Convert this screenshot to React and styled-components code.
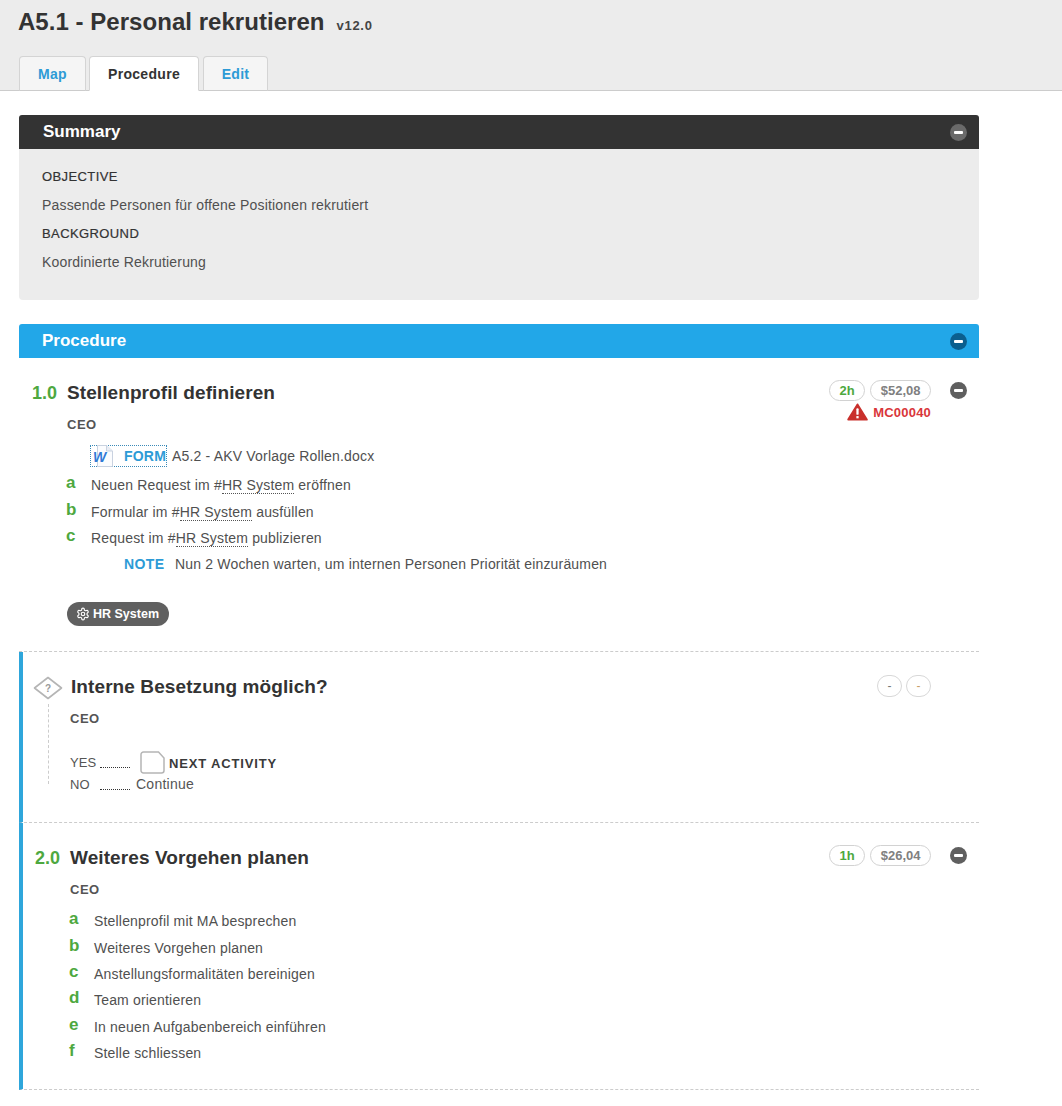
import React from "react";
import styled, { createGlobalStyle } from "styled-components";
import { LuSettings } from "react-icons/lu";

const GlobalStyle = createGlobalStyle`
  html, body {
    margin: 0;
    padding: 0;
    background: #fff;
    font-family: "Liberation Sans", Arial, sans-serif;
    color: #505050;
  }
`;

const Page = styled.div`
  width: 1062px;
  height: 1106px;
  overflow: hidden;
`;

const Header = styled.header`
  height: 90px;
  background: #ececec;
  border-bottom: 1px solid #ccc;
  padding-left: 18px;
  display: flex;
  flex-direction: column;
  justify-content: space-between;
`;

const TitleRow = styled.div`
  display: flex;
  align-items: baseline;
  gap: 12px;
  padding-top: 8px;
`;

const Title = styled.h1`
  margin: 0;
  font-size: 24px;
  line-height: 28px;
  font-weight: bold;
  letter-spacing: 0.04px;
  color: #333;
`;

const Version = styled.span`
  font-size: 13px;
  font-weight: bold;
  letter-spacing: 0.7px;
  color: #444;
`;

const Tabs = styled.nav`
  display: flex;
  gap: 3px;
  padding-left: 1px;
  margin-bottom: -1px;
`;

const Tab = styled.a`
  box-sizing: border-box;
  height: 35px;
  width: ${(p) => p.$w}px;
  margin-right: ${(p) => p.$mr || 0}px;
  display: flex;
  align-items: center;
  justify-content: center;
  font-size: 14px;
  font-weight: bold;
  letter-spacing: 0.3px;
  border: 1px solid #d4d4d4;
  border-bottom: ${(p) => (p.$active ? "1px solid #fff" : "1px solid #ccc")};
  border-radius: 4px 4px 0 0;
  background: ${(p) => (p.$active ? "#fff" : "#f5f5f5")};
  color: ${(p) => (p.$active ? "#333" : "#2d9bd6")};
`;

const Content = styled.main`
  width: 960px;
  margin-left: 19px;
  padding-top: 24px;
`;

const Bar = styled.div`
  height: 34px;
  box-sizing: border-box;
  display: flex;
  align-items: center;
  justify-content: space-between;
  padding: 0 12px 0 ${(p) => p.$pl}px;
  background: ${(p) => p.$bg};
  border-radius: 3px 3px 0 0;
  color: #fff;
  font-size: 17px;
  font-weight: bold;
`;

const Toggle = styled.span`
  width: 17px;
  height: 17px;
  border-radius: 50%;
  background: ${(p) => p.$bg};
  display: flex;
  align-items: center;
  justify-content: center;
  flex: none;
  &::before {
    content: "";
    width: 9px;
    height: 3px;
    background: #fff;
    border-radius: 1px;
  }
`;

const SummaryBody = styled.section`
  height: 151px;
  box-sizing: border-box;
  background: #ececec;
  border-radius: 0 0 4px 4px;
  padding: 21px 23px 0;
  margin-bottom: 24px;
`;

const SummaryHead = styled.div`
  font-size: 13px;
  line-height: 14px;
  letter-spacing: 0.4px;
  margin-bottom: 14px;
  color: #333;
  -webkit-text-stroke: 0.2px #333;
`;

const SummaryText = styled.div`
  font-size: 14px;
  line-height: 14px;
  letter-spacing: 0.18px;
  margin-bottom: 15px;
  color: #505050;
`;

const Block = styled.article`
  position: relative;
  box-sizing: border-box;
  height: ${(p) => p.$h}px;
  padding: ${(p) => p.$pt}px 0 0 ${(p) => p.$pl}px;
  border-left: ${(p) => (p.$rail ? "4px solid #2ea6db" : "0")};
  border-bottom: 1px dashed #ccc;
`;

const Heading = styled.div`
  display: flex;
  align-items: baseline;
  height: 24px;
`;

const Num = styled.span`
  width: 35px;
  flex: none;
  font-size: 18px;
  font-weight: bold;
  color: #4ea83f;
`;

const StepTitle = styled.h2`
  margin: 0;
  font-size: 19px;
  font-weight: bold;
  letter-spacing: 0.09px;
  color: #333;
  line-height: 24px;
`;

const DecisionTitle = styled(StepTitle)`
  margin-left: 1px;
`;

const Role = styled.div`
  margin: ${(p) => p.$mt}px 0 0 ${(p) => p.$ml}px;
  font-size: 13px;
  line-height: 14px;
  font-weight: bold;
  letter-spacing: 0.5px;
  color: #555;
`;

const Meta = styled.div`
  position: absolute;
  top: ${(p) => p.$top}px;
  right: 48px;
  display: flex;
  flex-direction: column;
  align-items: flex-end;
`;

const PillRow = styled.div`
  display: flex;
  gap: 5px;
`;

const Pill = styled.span`
  box-sizing: border-box;
  height: 21px;
  padding: 0 9.5px;
  border: 1px solid #d2d2d2;
  border-radius: 11px;
  display: flex;
  align-items: center;
  justify-content: center;
  font-size: 13px;
  font-weight: bold;
  color: ${(p) => p.$color};
`;

const BlankPill = styled.span`
  box-sizing: border-box;
  width: 25px;
  height: 22px;
  margin-left: -1px;
  border: 1px solid #d8d8d8;
  border-radius: 11px;
  display: flex;
  align-items: center;
  justify-content: center;
  font-size: 12px;
  color: ${(p) => p.$color};
`;

const Warning = styled.div`
  display: flex;
  align-items: center;
  gap: 5px;
  margin-top: 2px;
  font-size: 13px;
  font-weight: bold;
  letter-spacing: 0.2px;
  color: #d9363a;
`;

const Collapse = styled.div`
  position: absolute;
  top: ${(p) => p.$top}px;
  right: 12px;
`;

const Indent = styled.div`
  margin-left: 35px;
`;

const FormRow = styled.div`
  display: flex;
  align-items: center;
  margin: 13px 0 0 23px;
  height: 22px;
  font-size: 14px;
  letter-spacing: 0.18px;
`;

const FormLink = styled.span`
  display: flex;
  align-items: center;
  height: 20px;
  border: 1px dotted #3a8ab8;
  margin-right: 5px;
  font-size: 14px;
  font-weight: bold;
  letter-spacing: 0.2px;
  color: #2d9bd6;
  gap: 9px;
`;

const Items = styled.ol`
  list-style: none;
  margin: ${(p) => p.$mt}px 0 0;
  padding: 0;
`;

const Item = styled.li`
  display: flex;
  align-items: center;
  height: 26.4px;
  font-size: 14px;
  letter-spacing: 0.18px;
  color: #505050;
`;

const Letter = styled.span`
  width: 24px;
  flex: none;
  margin-left: -1px;
  margin-right: 1px;
  font-size: 17px;
  font-weight: bold;
  color: #4ea83f;
  position: relative;
  top: -2px;
`;

const Term = styled.span`
  border-bottom: 1px dotted #555;
  line-height: 14px;
`;

const NoteRow = styled.div`
  display: flex;
  align-items: center;
  height: 26px;
  margin-left: 57px;
  font-size: 14px;
  letter-spacing: 0.18px;
  color: #505050;
`;

const NoteLabel = styled.span`
  width: 51px;
  font-weight: bold;
  letter-spacing: 0.4px;
  color: #2d9bd6;
`;

const Tag = styled.span`
  display: inline-flex;
  align-items: center;
  gap: 3px;
  height: 24px;
  margin-top: 25px;
  padding: 0 10px 0 9px;
  border-radius: 12px;
  background: #606060;
  color: #fff;
  font-size: 12.5px;
  font-weight: bold;
`;

const DecisionHead = styled.div`
  display: flex;
  align-items: center;
  height: 24px;
`;

const DiamondBox = styled.div`
  position: absolute;
  left: 10px;
  top: 24px;
`;

const Guide = styled.div`
  position: absolute;
  left: 25px;
  top: 52px;
  height: 80px;
  border-left: 1px dashed #ccc;
`;

const Branches = styled.div`
  margin-top: 25px;
  font-size: 14px;
  letter-spacing: 0.25px;
  color: #555;
`;

const Branch = styled.div`
  display: flex;
  align-items: center;
  height: ${(p) => p.$h}px;
`;

const BranchLabel = styled.span`
  width: 30px;
  flex: none;
  font-size: 13px;
  letter-spacing: 0.1px;
`;

const Dots = styled.span`
  width: 30px;
  flex: none;
  margin-right: ${(p) => p.$mr}px;
  border-bottom: 1px dotted #333;
  height: 10px;
  align-self: center;
`;

const NextLabel = styled.span`
  margin-left: 4px;
  font-size: 13px;
  font-weight: bold;
  letter-spacing: 0.85px;
  color: #3a3a3a;
  position: relative;
  top: 1px;
`;

const WordIcon = () => (
  <svg width="24" height="22" viewBox="0 0 24 22">
    <path d="M6.500 0.500h9l6 5.500v15.500h-15z" fill="#fbfcfe" stroke="#c9d2e0" />
    <path d="M15.500 0.500v5.500h6" fill="#e8edf5" stroke="#c9d2e0" />
    <text x="2" y="16.500" fontFamily="Liberation Sans" fontSize="14" fontWeight="bold" fontStyle="italic" fill="#2f7ad6">
      W
    </text>
  </svg>
);

const AlertIcon = () => (
  <svg width="21" height="18" viewBox="0 0 22 19">
    <path d="M11 1.500 L20.800 17.500 H1.200 Z" fill="#c9302c" stroke="#c9302c" strokeWidth="2" strokeLinejoin="round" />
    <rect x="9.800" y="5.500" width="2.400" height="7" rx="1" fill="#fff" />
    <rect x="9.800" y="13.800" width="2.400" height="2.400" fill="#fff" />
  </svg>
);

const DiamondIcon = () => (
  <svg width="30" height="24" viewBox="0 0 30 24">
    <path d="M15 1.500 L28.500 12 L15 22.500 L1.500 12 Z" fill="#fff" stroke="#b5b5b5" strokeWidth="1.600" strokeLinejoin="round" />
    <text x="15" y="16" textAnchor="middle" fontFamily="Liberation Sans" fontSize="10" fontWeight="bold" fill="#999">
      ?
    </text>
  </svg>
);

const PageIcon = () => (
  <svg width="25" height="23" viewBox="0 0 25 23">
    <path d="M3.500 1h15l5.500 6v12.500a2.500 2.500 0 0 1-2.500 2.500h-18A2.500 2.500 0 0 1 1 19.500v-16A2.500 2.500 0 0 1 3.500 1z" fill="#fff" stroke="#b5b5b5" strokeWidth="1.500" />
  </svg>
);

const stepOne = [
  ["a", "Neuen Request im #", "HR System", " eröffnen"],
  ["b", "Formular im #", "HR System", " ausfüllen"],
  ["c", "Request im #", "HR System", " publizieren"],
];

const stepTwo = [
  ["a", "Stellenprofil mit MA besprechen"],
  ["b", "Weiteres Vorgehen planen"],
  ["c", "Anstellungsformalitäten bereinigen"],
  ["d", "Team orientieren"],
  ["e", "In neuen Aufgabenbereich einführen"],
  ["f", "Stelle schliessen"],
];

export default function App() {
  return (
    <Page>
      <GlobalStyle />
      <Header>
        <TitleRow>
          <Title>A5.1 - Personal rekrutieren</Title>
          <Version>v12.0</Version>
        </TitleRow>
        <Tabs>
          <Tab $w={67}>Map</Tab>
          <Tab $w={110} $mr={1} $active>
            Procedure
          </Tab>
          <Tab $w={65}>Edit</Tab>
        </Tabs>
      </Header>

      <Content>
        <Bar $bg="#333" $pl={24}>
          Summary
          <Toggle $bg="#6a6a6a" />
        </Bar>
        <SummaryBody>
          <SummaryHead>OBJECTIVE</SummaryHead>
          <SummaryText>Passende Personen für offene Positionen rekrutiert</SummaryText>
          <SummaryHead>BACKGROUND</SummaryHead>
          <SummaryText>Koordinierte Rekrutierung</SummaryText>
        </SummaryBody>

        <Bar $bg="#22a7e8" $pl={23}>
          Procedure
          <Toggle $bg="#0b5f8e" />
        </Bar>

        <Block $h={294} $pt={23} $pl={13}>
          <Heading>
            <Num>1.0</Num>
            <StepTitle>Stellenprofil definieren</StepTitle>
          </Heading>
          <Role $mt={13} $ml={35}>CEO</Role>
          <Meta $top={22}>
            <PillRow>
              <Pill $color="#4ea83f">2h</Pill>
              <Pill $color="#808080">$52,08</Pill>
            </PillRow>
            <Warning>
              <AlertIcon />
              MC00040
            </Warning>
          </Meta>
          <Collapse $top={24}>
            <Toggle $bg="#5f5f5f" />
          </Collapse>
          <Indent>
            <FormRow>
              <FormLink>
                <WordIcon />
                FORM
              </FormLink>
              A5.2 - AKV Vorlage Rollen.docx
            </FormRow>
            <Items $mt={5}>
              {stepOne.map(([letter, before, term, after]) => (
                <Item key={letter}>
                  <Letter>{letter}</Letter>
                  <span>
                    {before}
                    <Term>{term}</Term>
                    {after}
                  </span>
                </Item>
              ))}
            </Items>
            <NoteRow>
              <NoteLabel>NOTE</NoteLabel>
              Nun 2 Wochen warten, um internen Personen Priorität einzuräumen
            </NoteRow>
            <Tag>
              <LuSettings size={14} />
              HR System
            </Tag>
          </Indent>
        </Block>

        <Block $rail $h={171} $pt={23} $pl={47}>
          <DiamondBox>
            <DiamondIcon />
          </DiamondBox>
          <Guide />
          <DecisionHead>
            <DecisionTitle>Interne Besetzung möglich?</DecisionTitle>
          </DecisionHead>
          <Role $mt={13} $ml={0}>CEO</Role>
          <Meta $top={23}>
            <PillRow>
              <BlankPill $color="#777">-</BlankPill>
              <BlankPill $color="#c9a06a">-</BlankPill>
            </PillRow>
          </Meta>
          <Branches>
            <Branch $h={23}>
              <BranchLabel>YES</BranchLabel>
              <Dots $mr={10} />
              <PageIcon />
              <NextLabel>NEXT ACTIVITY</NextLabel>
            </Branch>
            <Branch $h={20}>
              <BranchLabel>NO</BranchLabel>
              <Dots $mr={6} />
              Continue
            </Branch>
          </Branches>
        </Block>

        <Block $rail $h={267} $pt={23} $pl={12}>
          <Heading>
            <Num>2.0</Num>
            <StepTitle>Weiteres Vorgehen planen</StepTitle>
          </Heading>
          <Role $mt={13} $ml={35}>CEO</Role>
          <Meta $top={22}>
            <PillRow>
              <Pill $color="#4ea83f">1h</Pill>
              <Pill $color="#808080">$26,04</Pill>
            </PillRow>
          </Meta>
          <Collapse $top={24}>
            <Toggle $bg="#5f5f5f" />
          </Collapse>
          <Indent>
            <Items $mt={11}>
              {stepTwo.map(([letter, text]) => (
                <Item key={letter}>
                  <Letter>{letter}</Letter>
                  <span>{text}</span>
                </Item>
              ))}
            </Items>
          </Indent>
        </Block>
      </Content>
    </Page>
  );
}
